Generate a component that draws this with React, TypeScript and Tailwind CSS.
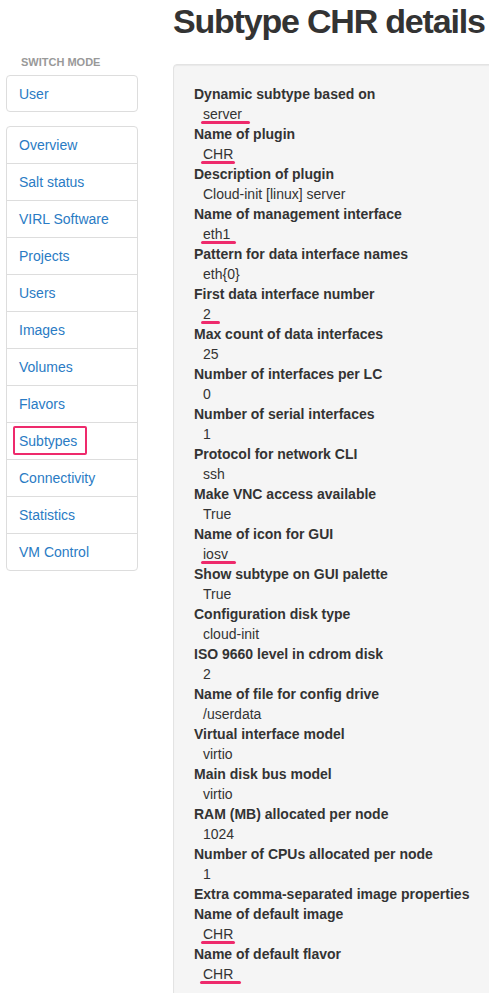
const navItems = [
  "Overview",
  "Salt status",
  "VIRL Software",
  "Projects",
  "Users",
  "Images",
  "Volumes",
  "Flavors",
  "Subtypes",
  "Connectivity",
  "Statistics",
  "VM Control",
];

// mark = hand drawn pink underline under the value
const details: { label: string; value?: string; mark?: string }[] = [
  { label: "Dynamic subtype based on", value: "server", mark: "left-[7px] w-[49px]" },
  { label: "Name of plugin", value: "CHR", mark: "left-[7px] w-[34px]" },
  { label: "Description of plugin", value: "Cloud-init [linux] server" },
  { label: "Name of management interface", value: "eth1", mark: "left-[7px] w-[35px]" },
  { label: "Pattern for data interface names", value: "eth{0}" },
  { label: "First data interface number", value: "2", mark: "left-[7px] w-[19px]" },
  { label: "Max count of data interfaces", value: "25" },
  { label: "Number of interfaces per LC", value: "0" },
  { label: "Number of serial interfaces", value: "1" },
  { label: "Protocol for network CLI", value: "ssh" },
  { label: "Make VNC access available", value: "True" },
  { label: "Name of icon for GUI", value: "iosv", mark: "left-[7px] w-[35px]" },
  { label: "Show subtype on GUI palette", value: "True" },
  { label: "Configuration disk type", value: "cloud-init" },
  { label: "ISO 9660 level in cdrom disk", value: "2" },
  { label: "Name of file for config drive", value: "/userdata" },
  { label: "Virtual interface model", value: "virtio" },
  { label: "Main disk bus model", value: "virtio" },
  { label: "RAM (MB) allocated per node", value: "1024" },
  { label: "Number of CPUs allocated per node", value: "1" },
  { label: "Extra comma-separated image properties" },
  { label: "Name of default image", value: "CHR", mark: "left-[7px] w-[34px]" },
  { label: "Name of default flavor", value: "CHR", mark: "left-[6px] w-[41px]" },
];

export default function App() {
  return (
    <div className="h-screen w-full overflow-hidden bg-white text-[14px] leading-[20px] text-[#333] font-['Liberation_Sans',Arial,sans-serif] flex">
      {/* Sidebar */}
      <aside className="ml-[6px] w-[132px] shrink-0">
        <div className="pt-[55px] mb-[5px] pl-[15px] text-[11px] leading-[15px] font-bold uppercase text-[#999]">
          Switch mode
        </div>
        <div className="border border-[#ddd] rounded-[4px] h-[37px] flex items-center pl-[12px] text-[#2a7bc4]">
          User
        </div>
        <ul className="mt-[14px] border border-[#ddd] rounded-[4px]">
          {navItems.map((item, i) => (
            <li
              key={item}
              className={
                "relative flex items-center pl-[12px] text-[#2a7bc4] " +
                (i === 0 ? "h-[36px]" : "h-[37px] border-t border-[#ddd]")
              }
            >
              {item}
              {item === "Subtypes" && (
                <span className="absolute left-[6px] top-[3px] w-[74px] h-[29px] border-2 border-[#ee2a6c] rounded-[2px]" />
              )}
            </li>
          ))}
        </ul>
      </aside>

      {/* Main */}
      <main className="ml-[35px] w-[360px] shrink-0">
        <h1 className="mt-[2px] text-[34px] leading-[38px] tracking-[-1.2px] font-bold text-[#333] whitespace-nowrap">
          Subtype CHR details
        </h1>
        <div className="mt-[24px] bg-[#f5f5f5] border border-[#e3e3e3] rounded-[4px] shadow-[inset_0_1px_1px_rgba(0,0,0,0.05)] p-[19px] pl-[20px]">
          <dl>
            {details.map((d) => (
              <div key={d.label}>
                <dt className="font-bold whitespace-nowrap">{d.label}</dt>
                {d.value && (
                  <dd className="relative pl-[9px]">
                    {d.value}
                    {d.mark && (
                      <span
                        className={
                          "absolute top-[17px] h-[3px] rounded-full bg-[#ee2a6c] " + d.mark
                        }
                      />
                    )}
                  </dd>
                )}
              </div>
            ))}
          </dl>
        </div>
      </main>
    </div>
  );
}
